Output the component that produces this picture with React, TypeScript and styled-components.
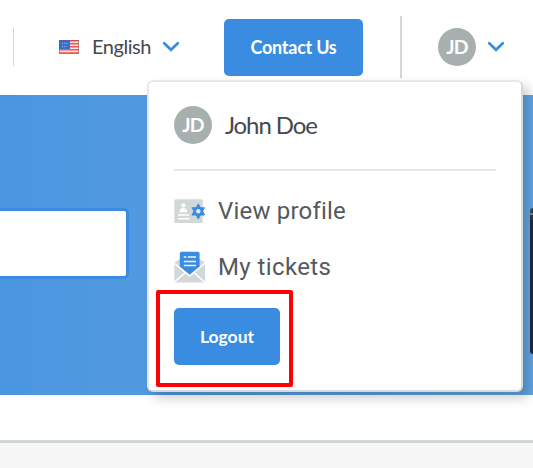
import React from "react";
import styled, { createGlobalStyle } from "styled-components";

const GlobalStyle = createGlobalStyle`
  * { box-sizing: border-box; }
  body { margin: 0; background: #fff; overflow: hidden; font-family: Lato, "Liberation Sans", sans-serif; }
`;

const Page = styled.div`
  position: relative;
  width: 533px;
  height: 468px;
  overflow: hidden;
  display: flex;
  flex-direction: column;
  background: #fff;
`;

const Header = styled.header`
  display: flex;
  align-items: center;
  flex: none;
  height: 95px;
  padding-bottom: 1px;
`;

const Divider = styled.span<{ $w: number; $h: number }>`
  flex: none;
  width: ${(p) => p.$w}px;
  height: ${(p) => p.$h}px;
  background: #d1d6d6;
`;

const LeadingDivider = styled(Divider)`
  margin-left: 13px;
`;

const Language = styled.div`
  display: flex;
  align-items: center;
  width: 165px;
  margin-left: 45px;
  color: #45494c;
  font-size: 20px;
  line-height: 24px;
`;

const LanguageName = styled.span`
  width: 71px;
  margin: 0 0 2px 13px;
  letter-spacing: -0.45px;
  white-space: nowrap;
`;

const Button = styled.button<{ $w: number; $size: number; $spacing: number }>`
  flex: none;
  display: flex;
  align-items: center;
  justify-content: center;
  width: ${(p) => p.$w}px;
  height: 57px;
  padding: 0;
  border: 0;
  border-radius: 5px;
  background: #398cdf;
  color: #fff;
  font: 700 ${(p) => p.$size}px/24px Lato, sans-serif;
  letter-spacing: ${(p) => p.$spacing}px;
  white-space: nowrap;
`;

const HeaderDivider = styled(Divider)`
  margin-left: 37px;
  margin-right: 36px;
`;

const Avatar = styled.span`
  flex: none;
  display: flex;
  align-items: center;
  justify-content: center;
  width: 38px;
  height: 38px;
  padding-bottom: 1px;
  border-radius: 50%;
  background: #a7b0af;
  color: #fff;
  font: 700 19.5px/24px Lato, sans-serif;
  letter-spacing: -0.8px;
`;

const ChevronSvg = styled.svg<{ $gap: number }>`
  flex: none;
  margin-left: ${(p) => p.$gap}px;
`;

const Hero = styled.section`
  display: flex;
  align-items: center;
  justify-content: space-between;
  flex: none;
  height: 300px;
  background: linear-gradient(90deg, #4b96e0, #569de2 50%, #64a5e4);
`;

const SearchField = styled.div`
  width: 129px;
  height: 71px;
  margin-bottom: 3px;
  border: 3px solid #398cdf;
  border-left: 0;
  border-radius: 0 5px 5px 0;
  background: #fff;
`;

const Device = styled.div`
  width: 3px;
  height: 146px;
  margin-top: 72px;
  border-radius: 5px 0 0 5px;
  background: linear-gradient(#3a4652 0 5px, #858585 5px 7px, #34383e 7px 12px, #252a30 12px);
`;

const Footer = styled.footer`
  flex: 1;
  margin-top: 45px;
  border-top: 3px solid #d1d6d6;
  background: #f6f6f6;
`;

const Menu = styled.aside`
  position: absolute;
  left: 147px;
  top: 80px;
  width: 376px;
  height: 312px;
  padding: 25px 25px 0;
  border: 2px solid #e7e9e9;
  border-right-color: #d3dbdf;
  border-bottom-color: #d3dbdf;
  border-radius: 6px;
  background: #fff;
  box-shadow: 6px 6px 12px rgba(0, 0, 0, 0.2);
`;

const User = styled.div`
  display: flex;
  align-items: center;
  height: 64px;
  padding-bottom: 26px;
  border-bottom: 2px solid #e7e9e9;
  color: #45494c;
`;

const UserName = styled.span`
  margin-left: 13px;
  font-size: 24px;
  line-height: 30px;
  letter-spacing: -1.1px;
`;

const Items = styled.nav`
  display: flex;
  flex-direction: column;
  padding-top: 12px;
`;

const Item = styled.a`
  display: flex;
  align-items: center;
  height: 56px;
  color: #55595c;
  font: 400 24px/30px Roboto, sans-serif;
`;

const ItemLabel = styled.span<{ $spacing: number }>`
  margin-left: 13px;
  letter-spacing: ${(p) => p.$spacing}px;
  white-space: nowrap;
`;

const LogoutRow = styled.div`
  display: flex;
  padding-top: 13px;
`;

const Highlight = styled.div`
  position: absolute;
  left: 156px;
  top: 290px;
  width: 137px;
  height: 97px;
  border: 4px solid #fd0008;
  border-radius: 2px;
  pointer-events: none;
`;

const Chevron = ({ gap }: { gap: number }) => (
  <ChevronSvg $gap={gap} width="18" height="12" viewBox="0 0 18 12" fill="none">
    <path d="M2.2 2.3 9 8.8l6.8-6.5" stroke="#398cdf" strokeWidth="2.7" strokeLinecap="round" />
  </ChevronSvg>
);

const Flag = () => (
  <svg width="20" height="14" viewBox="0 0 20 14">
    <rect width="20" height="14" fill="#fae3df" />
    <path d="M0 .8h20M0 3.8h20M0 6.7h20M0 9.8h20M0 12.9h20" stroke="#ed5a56" strokeWidth="1.5" />
    <rect width="11" height="9" fill="#336fcf" />
    <path d="M3 3.4h6M3 6.4h5" stroke="#a9ccf6" strokeWidth="1" strokeDasharray="1 1.3" />
    <rect x=".5" y=".5" width="19" height="13" fill="none" stroke="#8b4b55" strokeOpacity=".45" />
  </svg>
);

const ProfileIcon = () => (
  <svg width="31" height="32" viewBox="0 0 31 32">
    <rect x=".3" y="4.3" width="28.5" height="23.7" rx="1.5" fill="#d2d7d7" />
    <circle cx="9.3" cy="10.3" r="2.1" fill="#fff" />
    <path d="M5.5 17.3c0-3 1.3-4.3 3.8-4.3s3.8 1.3 3.8 4.3z" fill="#fff" />
    <path d="M4 20h11.2M4 23.7h11.2" stroke="#fff" strokeWidth="1.4" />
    <path d="m24.3 9.2 2.1 3.8 3.9-.2-1.9 3.5 1.9 3.5-3.9-.2-2.1 3.8-2.1-3.8-3.9.2 1.9-3.5-1.9-3.5 3.9.2z" fill="#398cdf" stroke="#398cdf" strokeWidth="1.3" strokeLinejoin="round" />
    <circle cx="24.3" cy="16.3" r="2.2" fill="#e0e8ee" />
  </svg>
);

const TicketIcon = () => (
  <svg width="31" height="32" viewBox="0 0 31 32">
    <path d="M.3 11.5 6 8h19.5l5.5 3.5v20H.3z" fill="#d2d7d7" />
    <path d="m0 12 15.7 13L31 12M0 31.5 11.3 21.5M31 31.5 20 21.5" fill="none" stroke="#fff" strokeWidth="1.5" />
    <path d="M5.8 2.5Q5.8.7 7.6.7h16.2q1.8 0 1.8 1.8v13l-9.9 8-9.9-8z" fill="#398cdf" />
    <path d="M9.8 6h2.5M13.8 6H22M9.8 10.4H22M9.8 14.6H22" stroke="#fff" strokeOpacity=".9" strokeWidth="1.5" />
  </svg>
);

export default function App() {
  return (
    <Page>
      <GlobalStyle />
      <Header>
        <LeadingDivider $w={1} $h={38} />
        <Language>
          <Flag />
          <LanguageName>English</LanguageName>
          <Chevron gap={-1} />
        </Language>
        <Button $w={139} $size={18} $spacing={-0.25}>Contact Us</Button>
        <HeaderDivider $w={2} $h={62} />
        <Avatar>JD</Avatar>
        <Chevron gap={11} />
      </Header>
      <Hero>
        <SearchField />
        <Device />
      </Hero>
      <Footer />
      <Menu>
        <User>
          <Avatar>JD</Avatar>
          <UserName>John Doe</UserName>
        </User>
        <Items>
          <Item>
            <ProfileIcon />
            <ItemLabel $spacing={0.2}>View profile</ItemLabel>
          </Item>
          <Item>
            <TicketIcon />
            <ItemLabel $spacing={0.4}>My tickets</ItemLabel>
          </Item>
        </Items>
        <LogoutRow>
          <Button $w={106} $size={17.5} $spacing={0}>Logout</Button>
        </LogoutRow>
      </Menu>
      <Highlight />
    </Page>
  );
}
